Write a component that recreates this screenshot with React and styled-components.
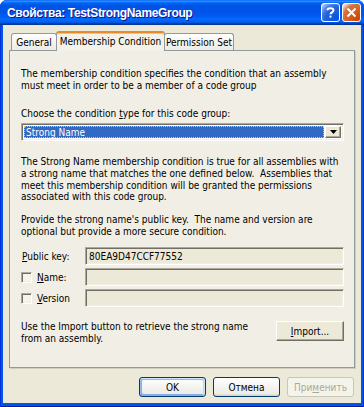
import React from 'react';
import styled, { createGlobalStyle, css } from 'styled-components';

const Global = createGlobalStyle`
  html, body { margin: 0; padding: 0; background: #fff; }
  body { width: 364px; height: 407px; overflow: hidden; }
  * { box-sizing: border-box; }
`;

const Window = styled.div`
  width: 364px;
  height: 407px;
  display: flex;
  flex-direction: column;
  background: #0055ea;
  border-radius: 7px 7px 0 0;
  padding: 0 3px 4px 3px;
  box-shadow: inset 1px 0 #0831d9, inset -1px 0 #0831d9, inset 0 -1px #001ea0;
  font-family: "DejaVu Sans", "Liberation Sans", sans-serif;
  font-stretch: condensed;
  font-size: 10px;
  color: #000;
`;

const TitleBar = styled.div`
  height: 25px;
  flex: none;
  margin: 0 -3px;
  display: flex;
  align-items: center;
  padding: 0 3px 0 7px;
  border-radius: 7px 7px 0 0;
  background: linear-gradient(180deg, #0058ee 0%, #3593ff 4%, #288eff 6%, #127dff 8%, #036ffc 10%, #0262ee 14%, #0057e5 20%, #0054e3 24%, #0055eb 56%, #005bf5 66%, #026afe 76%, #0062ef 86%, #0052d6 92%, #0040ab 94%, #003092 100%);
`;

const Title = styled.div`
  flex: 1;
  color: #fff;
  font-family: "Liberation Sans", Arial, sans-serif;
  font-stretch: normal;
  font-weight: bold;
  font-size: 12px;
  letter-spacing: -0.35px;
  text-shadow: 1px 1px #0f1089;
  white-space: nowrap;
`;

const CaptionButtons = styled.div`
  display: flex;
  gap: 2px;
`;

const CaptionButton = styled.div`
  width: 19px;
  height: 19px;
  border: 1px solid #fff;
  border-radius: 3px;
  display: flex;
  align-items: center;
  justify-content: center;
  ${(p) =>
    p.$close
      ? css`background: radial-gradient(circle at 90% 90%, #cc4600 0%, #dc6527 55%, #cd7546 70%, #ffccb2 90%, #fff 100%);`
      : css`background: radial-gradient(circle at 90% 90%, #0054e9 0%, #2263d5 55%, #4479e4 70%, #a3bbec 90%, #fff 100%);`}
`;

const Body = styled.div`
  flex: 1;
  background: #ece9d8;
  display: flex;
  flex-direction: column;
  padding: 6px 6px 0 6px;
`;

const TabRow = styled.div`
  display: flex;
  align-items: flex-end;
  height: 19px;
  padding-left: 2px;
  position: relative;
  z-index: 1;
`;

const Tab = styled.div`
  height: ${(p) => (p.$active ? '20px' : '17px')};
  width: ${(p) => p.$w}px;
  border: 1px solid #919b9c;
  border-bottom: none;
  border-radius: 3px 3px 0 0;
  display: flex;
  align-items: center;
  justify-content: center;
  white-space: nowrap;
  margin-bottom: ${(p) => (p.$active ? '-1px' : '0')};
  ${(p) =>
    p.$active
      ? css`
          background: #f3f1e8;
          border-top: 2px solid #e68b2c;
          box-shadow: inset 0 1px #ffc73c;
          padding-bottom: 1px;
          margin-left: -1px;
          margin-right: -1px;
        `
      : css`background: linear-gradient(180deg, #fff 0%, #f4f3ee 60%, #ecebe6 100%);`}
`;

const Panel = styled.div`
  height: 318px;
  border: 1px solid #919b9c;
  background: #f1efe5;
  box-shadow: 1px 1px #d0cebf;
  display: flex;
  flex-direction: column;
  padding: 17px 10px 0 11px;
`;

const Text = styled.div`
  line-height: 11.7px;
  margin-top: ${(p) => p.$mt || 0}px;
  white-space: nowrap;
`;

const U = styled.span`
  text-decoration: underline;
`;

const Sunken = css`
  border-top: 1px solid #aca899;
  border-left: 1px solid #aca899;
  border-right: 1px solid #fff;
  border-bottom: 1px solid #fff;
  box-shadow: inset 1px 1px #716f64, inset -1px -1px #f1efe2;
`;

const Combo = styled.div`
  margin-top: 3px;
  height: 18px;
  ${Sunken};
  background: #fff;
  display: flex;
  align-items: stretch;
  padding: 2px;
  gap: 1px;
`;

const ComboValue = styled.div`
  flex: 1;
  background: #316ac5;
  color: #fff;
  outline: 1px dotted #f0c060;
  outline-offset: -1px;
  display: flex;
  align-items: center;
  padding-left: 2px;
`;

const ComboButton = styled.div`
  width: 16px;
  background: #ece9d8;
  border-top: 1px solid #fff;
  border-left: 1px solid #fff;
  border-right: 1px solid #716f64;
  border-bottom: 1px solid #716f64;
  box-shadow: inset -1px -1px #aca899;
  display: flex;
  align-items: center;
  justify-content: center;
`;

const Field = styled.div`
  display: grid;
  grid-template-columns: 64px 1fr;
  align-items: center;
  height: 18px;
  margin-top: ${(p) => p.$mt || 3}px;
`;

const LabelCell = styled.div`
  display: flex;
  align-items: center;
  gap: 5px;
  padding-left: ${(p) => (p.$check ? 0 : 1)}px;
`;

const Check = styled.div`
  width: 11px;
  height: 11px;
  ${Sunken};
  background: #f4f3ee;
`;

const Input = styled.div`
  height: 18px;
  ${Sunken};
  background: #ece9d8;
  display: flex;
  align-items: center;
  padding-left: 3px;
`;

const ImportRow = styled.div`
  display: flex;
  justify-content: space-between;
  align-items: flex-start;
  margin-top: 14px;
`;

const ClassicButton = styled.div`
  width: 68px;
  height: 20px;
  background: #ece9d8;
  border-top: 1px solid #fff;
  border-left: 1px solid #fff;
  border-right: 1px solid #716f64;
  border-bottom: 1px solid #716f64;
  box-shadow: inset -1px -1px #aca899;
  display: flex;
  align-items: center;
  justify-content: center;
`;

const ButtonRow = styled.div`
  display: flex;
  justify-content: flex-end;
  gap: 7px;
  padding: 9px 1px 0 0;
`;

const XPButton = styled.div`
  width: 67px;
  height: 20px;
  border-radius: 3px;
  display: flex;
  align-items: center;
  justify-content: center;
  ${(p) =>
    p.$disabled
      ? css`
          border: 1px solid #c9c7ba;
          background: #f5f4ea;
          color: #aca899;
        `
      : css`
          border: 1px solid #003c74;
          background: linear-gradient(180deg, #fff 0%, #ecebe6 86%, #d6d0c5 100%);
        `}
  ${(p) =>
    p.$default &&
    css`
      box-shadow: inset -1px 1px #cee7ff, inset 1px 2px #98b8ea, inset -2px 2px #bcd4f6, inset 1px -1px #89ade4, inset 2px -2px #89ade4;
    `}
`;

export default function App() {
  return (
    <>
      <Global />
      <Window>
        <TitleBar>
          <Title>Свойства: TestStrongNameGroup</Title>
          <CaptionButtons>
            <CaptionButton>
              <svg width="13" height="13" viewBox="0 0 13 13">
                <path d="M3.5 4.2 C3.5 1.6 9.5 1.4 9.5 4.3 C9.5 6.3 6.5 6.3 6.5 8.3" stroke="#fff" strokeWidth="2" fill="none" />
                <rect x="5.5" y="9.6" width="2" height="2" fill="#fff" />
              </svg>
            </CaptionButton>
            <CaptionButton $close>
              <svg width="13" height="13" viewBox="0 0 13 13">
                <path d="M2.5 2.5 L10.5 10.5 M10.5 2.5 L2.5 10.5" stroke="#fff" strokeWidth="2" />
              </svg>
            </CaptionButton>
          </CaptionButtons>
        </TitleBar>
        <Body>
          <TabRow>
            <Tab $w={46}>General</Tab>
            <Tab $w={109} $active>Membership Condition</Tab>
            <Tab $w={70}>Permission Set</Tab>
          </TabRow>
          <Panel>
            <Text>
              The membership condition specifies the condition that an assembly
              <br />
              must meet in order to be a member of a code group
            </Text>
            <Text $mt={17}>
              Choose the condition <U>t</U>ype for this code group:
            </Text>
            <Combo>
              <ComboValue>Strong Name</ComboValue>
              <ComboButton>
                <svg width="7" height="4" viewBox="0 0 7 4">
                  <path d="M0 0 H7 L3.5 4 Z" fill="#000" />
                </svg>
              </ComboButton>
            </Combo>
            <Text $mt={15}>
              The Strong Name membership condition is true for all assemblies with
              <br />
              a strong name that matches the one defined below.&nbsp; Assemblies that
              <br />
              meet this membership condition will be granted the permissions
              <br />
              associated with this code group.
            </Text>
            <Text $mt={11}>
              Provide the strong name's public key.&nbsp; The name and version are
              <br />
              optional but provide a more secure condition.
            </Text>
            <Field $mt={10}>
              <LabelCell>
                <span><U>P</U>ublic key:</span>
              </LabelCell>
              <Input>80EA9D47CCF77552</Input>
            </Field>
            <Field>
              <LabelCell $check>
                <Check />
                <span><U>N</U>ame:</span>
              </LabelCell>
              <Input />
            </Field>
            <Field>
              <LabelCell $check>
                <Check />
                <span><U>V</U>ersion</span>
              </LabelCell>
              <Input />
            </Field>
            <ImportRow>
              <Text>
                Use the Import button to retrieve the strong name
                <br />
                from an assembly.
              </Text>
              <ClassicButton>
                <span><U>I</U>mport...</span>
              </ClassicButton>
            </ImportRow>
          </Panel>
          <ButtonRow>
            <XPButton $default>OK</XPButton>
            <XPButton>Отмена</XPButton>
            <XPButton $disabled>
              <span>При<U>м</U>енить</span>
            </XPButton>
          </ButtonRow>
        </Body>
      </Window>
    </>
  );
}
